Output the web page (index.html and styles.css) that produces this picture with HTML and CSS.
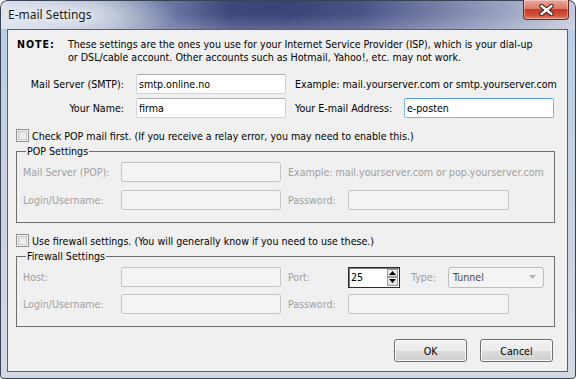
FILE: index.html
```html
<html>
<head>
	<link rel="stylesheet" href="styles.css">
</head>
<body>
	<div class="window">
		<div class="titlebar">
			<span class="title">E-mail Settings</span>
			<div class="close">
				<svg width="15" height="12" viewBox="0 0 15 12">
					<path d="M2.5 2 L12.5 10 M12.5 2 L2.5 10" stroke="#3a1713" stroke-width="4.4" stroke-linecap="round"/>
					<path d="M2.5 2 L12.5 10 M12.5 2 L2.5 10" stroke="#ffffff" stroke-width="2.4" stroke-linecap="round"/>
				</svg>
			</div>
		</div>

		<div class="client">
			<div class="note">
				<span class="note-head">NOTE:</span>
				<span class="note-text">These settings are the ones you use for your Internet Service Provider (ISP), which is your dial-up<br>or DSL/cable account. Other accounts such as Hotmail, Yahoo!, etc. may not work.</span>
			</div>

			<div class="row">
				<label class="main-label">Mail Server (SMTP):</label>
				<input class="text" value="smtp.online.no">
				<span class="hint">Example: mail.yourserver.com or smtp.yourserver.com</span>
			</div>
			<div class="row row-name">
				<label class="main-label">Your Name:</label>
				<input class="text" value="firma">
				<label class="side-label">Your E-mail Address:</label>
				<input class="text focused" value="e-posten">
			</div>

			<div class="check-row"><span class="checkbox"></span>Check POP mail first. (If you receive a relay error, you may need to enable this.)</div>

			<div class="group">
				<span class="legend">POP Settings</span>
				<div class="grow">
					<span class="g-label">Mail Server (POP):</span>
					<input class="text off" disabled>
					<span class="g-hint">Example: mail.yourserver.com or pop.yourserver.com</span>
				</div>
				<div class="grow grow-2">
					<span class="g-label">Login/Username:</span>
					<input class="text off" disabled>
					<span class="g-side">Password:</span>
					<input class="text off pass" disabled>
				</div>
			</div>

			<div class="check-row"><span class="checkbox"></span>Use firewall settings. (You will generally know if you need to use these.)</div>

			<div class="group group-fw">
				<span class="legend">Firewall Settings</span>
				<div class="grow">
					<span class="g-label">Host:</span>
					<input class="text off" disabled>
					<span class="g-side">Port:</span>
					<div class="spin">
						<span class="spin-value">25</span>
						<div class="spin-arrows">
							<span class="spin-btn"><svg width="7" height="4" viewBox="0 0 7 4"><path d="M0 4 L3.5 0 L7 4 Z" fill="#000"/></svg></span>
							<span class="spin-btn"><svg width="7" height="4" viewBox="0 0 7 4"><path d="M0 0 L3.5 4 L7 0 Z" fill="#000"/></svg></span>
						</div>
					</div>
					<span class="g-type">Type:</span>
					<div class="select">
						<span>Tunnel</span>
						<svg width="7" height="4" viewBox="0 0 7 4"><path d="M0 0 L3.5 4 L7 0 Z" fill="#b4b4b4"/></svg>
					</div>
				</div>
				<div class="grow grow-2fw">
					<span class="g-label">Login/Username:</span>
					<input class="text off" disabled>
					<span class="g-side">Password:</span>
					<input class="text off pass" disabled>
				</div>
			</div>

			<div class="buttons">
				<button class="btn">OK</button>
				<button class="btn">Cancel</button>
			</div>
		</div>
	</div>
</body>
</html>
```

FILE: styles.css
```css
* {
	box-sizing: border-box;
}

body {
	margin: 0;
	background: #ffffff;
	font-family: "DejaVu Sans Condensed", "DejaVu Sans", sans-serif;
	font-stretch: condensed;
	font-size: 10.6px;
	color: #000000;
}

/* window frame, aero glass-ish */
.window {
	width: 576px;
	height: 379px;
	display: flex;
	flex-direction: column;
	border-radius: 7px 7px 4px 4px;
	overflow: hidden;
	box-shadow: inset 0 0 0 1px #3a4256;
	background:
		linear-gradient(180deg, rgba(0,0,0,0) 29px, #b9cfe6 29px, #c8d2df 200px, #d3d9e3 379px),
		radial-gradient(ellipse 110px 22px at 70px 15px, rgba(255,255,255,0.6), rgba(255,255,255,0)),
		linear-gradient(180deg, rgba(255,255,255,0) 14px, rgba(255,255,255,0.18) 29px),
		linear-gradient(90deg, #d6deeb 0, #c3cde0 40px, #a9b4cd 100px, #6b77a3 170px, #3d477b 230px, #3b4478 290px, #4a5386 360px, #7880a9 440px, #a5acc8 520px, #c5cbdc 576px);
}

.titlebar {
	height: 29px;
	display: flex;
	justify-content: space-between;
	align-items: flex-start;
	padding-left: 8px;
}

.title {
	font-family: "Noto Sans", sans-serif;
	font-stretch: normal;
	font-size: 12px;
	line-height: 16px;
	margin-top: 7px;
	color: #1c1c1c;
	text-shadow: 0 0 6px rgba(255,255,255,0.9);
}

.close {
	width: 46px;
	height: 20px;
	margin-right: 7px;
	display: flex;
	justify-content: center;
	align-items: center;
	border: 1px solid #6b2a22;
	border-top: none;
	border-radius: 0 0 4px 4px;
	background: linear-gradient(180deg, #e9a89c 0, #dc7a68 45%, #c63c26 50%, #d0513a 80%, #e0866f 100%);
	box-shadow: inset 0 0 0 1px rgba(255,255,255,0.35);
}

.client {
	flex: 1;
	margin: 0 8px 7px 7px;
	border: 1px solid #5a616d;
	background: #f0f0f0;
	padding-top: 8px;
}

.note {
	display: flex;
	padding-left: 9px;
	line-height: 13px;
	white-space: nowrap;
}

.note-head {
	width: 51px;
	font-weight: bold;
	letter-spacing: 1px;
}

.row {
	display: flex;
	align-items: center;
	height: 20px;
	margin-top: 10px;
	white-space: nowrap;
}

.row-name {
	margin-top: 4px;
}

.main-label {
	width: 116px;
	text-align: right;
	margin-right: 12px;
}

.hint {
	margin-left: 9px;
}

.side-label {
	width: 109px;
	margin-left: 9px;
}

.text {
	width: 150px;
	height: 20px;
	margin: 0;
	padding: 0 2px;
	font: inherit;
	color: #000000;
	background: #ffffff;
	border: 1px solid #cfd3d9;
	border-top-color: #abadb3;
	border-radius: 2px;
	outline: none;
}

.focused {
	border-color: #7eb4ea;
	border-top-color: #569de5;
}

.off {
	width: 160px;
	background: #f4f4f4;
	border-color: #c6c6c6;
}

.pass {
	width: 161px;
}

.check-row {
	display: flex;
	align-items: center;
	height: 15px;
	margin-top: 10px;
	padding-left: 8px;
	white-space: nowrap;
}

.checkbox {
	width: 13px;
	height: 13px;
	margin-right: 3px;
	border: 1px solid #8e8f8f;
	background: linear-gradient(135deg, #dadada, #fbfbfb);
	box-shadow: inset 0 0 0 1px #f4f4f4, inset 0 0 0 2px #c9c9c9;
}

.group {
	position: relative;
	margin: 8px 12px 0 8px;
	border: 1px solid #6f6f6f;
	padding: 10px 0 12px 6px;
	color: #a0a0a0;
}

.legend {
	position: absolute;
	top: -7px;
	left: 9px;
	padding: 0 1px;
	line-height: 13px;
	background: #f0f0f0;
	color: #000000;
}

.grow {
	display: flex;
	align-items: center;
	height: 20px;
	white-space: nowrap;
}

.grow-2 {
	margin-top: 8px;
}

.grow-2fw {
	margin-top: 7px;
}

.g-label {
	width: 98px;
}

.g-hint {
	margin-left: 7px;
}

.g-side {
	width: 60px;
	margin-left: 7px;
}

.g-type {
	width: 37px;
	margin-left: 11px;
}

/* port spinner */
.spin {
	width: 52px;
	height: 21px;
	display: flex;
	justify-content: space-between;
	background: #ffffff;
	border: 1px solid #2a2a2a;
	box-shadow: inset 1px 1px 0 #7a7a7a;
	color: #000000;
}

.spin-value {
	padding: 3px 0 0 2px;
}

.spin-arrows {
	display: flex;
	flex-direction: column;
	width: 12px;
	padding: 1px 1px 1px 0;
}

.spin-btn {
	flex: 1;
	display: flex;
	justify-content: center;
	align-items: center;
	background: linear-gradient(180deg, #f4f4f4, #dcdcdc);
	border: 1px solid #9c9c9c;
}

.select {
	width: 96px;
	height: 21px;
	display: flex;
	justify-content: space-between;
	align-items: center;
	padding: 0 7px 0 4px;
	background: #f4f4f4;
	border: 1px solid #bdbdbd;
	border-radius: 3px;
	color: #4a4a4a;
}

.buttons {
	display: flex;
	justify-content: flex-end;
	gap: 13px;
	margin-top: 12px;
	padding-right: 14px;
}

.btn {
	width: 73px;
	height: 23px;
	padding: 0;
	font: inherit;
	color: #000000;
	border: 1px solid #707070;
	border-radius: 3px;
	background: linear-gradient(180deg, #f2f2f2 0, #ebebeb 50%, #dddddd 51%, #cfcfcf 100%);
	box-shadow: inset 0 0 0 1px #fbfbfb;
}
```
